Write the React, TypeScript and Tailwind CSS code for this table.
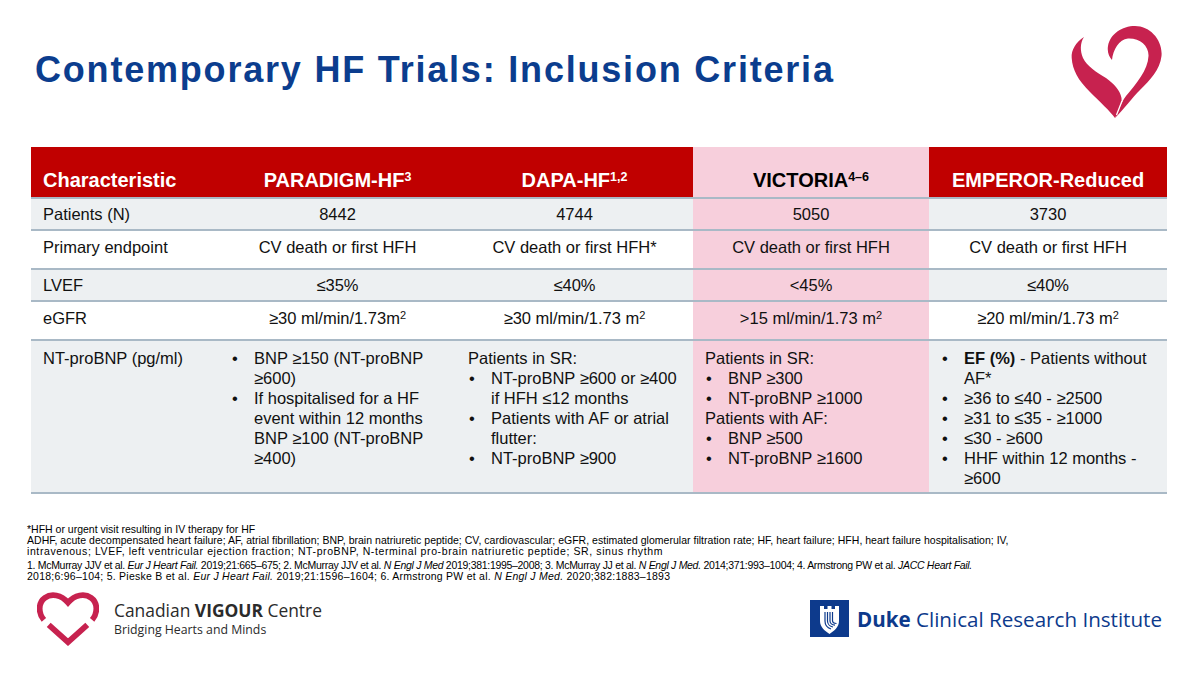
import React from "react";

const FONT = "font-['Liberation_Sans',Arial,sans-serif]";
const GRID = "grid grid-cols-[188px_237px_237px_236px_238px]";
const GRAY = "bg-[#edf0f2]";
const PINK = "bg-[#f7cfdc]";
const WHITE = "bg-white";

function TopHeart() {
  return (
    <svg width="92" height="94" viewBox="0 0 92 94">
      <path
        fill="#c7224f"
        d="M14,11 C6,16 1,24 1.7,32 C2.5,44 8,54 20,66 C30,76 40,85 45,92 L49,83 C51,79 52,76 51.5,72 C50,64 44,58 36,52 C26,46 17,40 13,32 C10,25 10,17 14,11 Z"
      />
      <path
        fill="#c7224f"
        d="M45,92 C55,82 62,72 70,64 C80,54 90,44 91.5,30 C93,14 80,0 65,0 C52,0 40,8 38,20 C37,26 39,31 42,34 C43,24 49,13 58,12.5 C70,12 79,20 78.5,30 C78,44 66,58 56,70 C53,74 51,78 49,83 L45,92 Z"
      />
      <path d="M52,75 L46.5,89" stroke="#ffffff" strokeWidth="1.3" fill="none" />
    </svg>
  );
}

function CvcHeart() {
  return (
    <svg width="62" height="54" viewBox="0 0 64 56">
      <path
        d="M7,29 C1,22 1,11 8,6 C15,1 25,3 32,11 C39,3 49,1 56,6 C63,11 63,22 57,29"
        stroke="#c7224f"
        strokeWidth="6"
        fill="none"
      />
      <path d="M12,34 L32,52 L52,34" stroke="#c7224f" strokeWidth="6" fill="none" />
    </svg>
  );
}

function DukeMark() {
  return (
    <svg width="39" height="37" viewBox="0 0 39 37">
      <rect x="0" y="0" width="39" height="37" fill="#0d3a8c" />
      <path
        d="M10,6 L14,6 L14,9 L17.5,9 L17.5,6 L21.5,6 L21.5,9 L25,9 L25,6 L29,6 L29,21 C29,27 24,31 19.5,34 C15,31 10,27 10,21 Z"
        fill="#ffffff"
      />
      <path
        d="M15,12 L15,21 C15,25 18,28 21,29 M17.5,12 L17.5,21 C17.5,24 20,26.5 23,27 M20,12 L20,21 C20,23 22,25 25,25.2 M22.5,12 L22.5,20.5 C22.5,22 24,23.5 26.5,23.5"
        stroke="#0d3a8c"
        strokeWidth="1.2"
        fill="none"
      />
    </svg>
  );
}

function Sup({ children, size = "text-[12.5px]" }: { children: React.ReactNode; size?: string }) {
  return <sup className={size}>{children}</sup>;
}

function B({ children }: { children: React.ReactNode }) {
  return (
    <div className="flex">
      <span className="w-[23px] shrink-0 pl-[1px]">•</span>
      <span className="whitespace-nowrap">{children}</span>
    </div>
  );
}

function P({ children }: { children: React.ReactNode }) {
  return <div className="whitespace-nowrap">{children}</div>;
}

function Row({
  h,
  bg,
  label,
  vals,
  pb = "",
}: {
  h: string;
  bg: string;
  label: React.ReactNode;
  vals: React.ReactNode[];
  pb?: string;
}) {
  return (
    <div className={GRID + " border-t-[2px] border-[#a9b9c6]"}>
      <div className={bg + " " + h + " " + pb + " flex items-center pl-[12px]"}>{label}</div>
      <div className={bg + " " + h + " " + pb + " flex items-center justify-center"}>{vals[0]}</div>
      <div className={bg + " " + h + " " + pb + " flex items-center justify-center"}>{vals[1]}</div>
      <div className={PINK + " " + h + " " + pb + " flex items-center justify-center"}>{vals[2]}</div>
      <div className={bg + " " + h + " " + pb + " flex items-center justify-center"}>{vals[3]}</div>
    </div>
  );
}

export default function App() {
  const m2 = <Sup size="text-[11px]">2</Sup>;
  return (
    <div className={FONT + " w-[1200px] h-[675px] bg-white text-[#111111] overflow-hidden"}>
      {/* Header */}
      <div className="flex justify-between items-start pl-[35px] pr-[38px] pt-[26px]">
        <h1 className="mt-[26px] text-[36px] leading-[35px] tracking-[1.8px] font-bold text-[#0b3d8e] whitespace-nowrap">
          Contemporary HF Trials: Inclusion Criteria
        </h1>
        <TopHeart />
      </div>

      {/* Table */}
      <div className="ml-[31px] mt-[27px] w-[1136px] text-[16.5px] leading-[20px]">
        <div className={GRID + " h-[50px] text-[20px] leading-[24px] font-bold"}>
          <div className="bg-[#c00000] text-white flex items-end pb-[5px] pl-[12px]">Characteristic</div>
          <div className="bg-[#c00000] text-white flex items-end justify-center pb-[5px]">
            <span>
              PARADIGM-HF<Sup>3</Sup>
            </span>
          </div>
          <div className="bg-[#c00000] text-white flex items-end justify-center pb-[5px]">
            <span>
              DAPA-HF<Sup>1,2</Sup>
            </span>
          </div>
          <div className={PINK + " text-black flex items-end justify-center pb-[5px]"}>
            <span>
              VICTORIA<Sup>4–6</Sup>
            </span>
          </div>
          <div className="bg-[#c00000] text-white flex items-end justify-center pb-[5px]">EMPEROR-Reduced</div>
        </div>

        <Row h="h-[30px]" bg={GRAY} label="Patients (N)" vals={["8442", "4744", "5050", "3730"]} />
        <Row
          h="h-[37px]"
          pb="pb-[5px]"
          bg={WHITE}
          label="Primary endpoint"
          vals={["CV death or first HFH", "CV death or first HFH*", "CV death or first HFH", "CV death or first HFH"]}
        />
        <Row h="h-[30px]" bg={GRAY} label="LVEF" vals={["≤35%", "≤40%", "<45%", "≤40%"]} />
        <Row
          h="h-[37px]"
          pb="pb-[5px]"
          bg={WHITE}
          label="eGFR"
          vals={[
            <span>≥30 ml/min/1.73m{m2}</span>,
            <span>≥30 ml/min/1.73 m{m2}</span>,
            <span>&gt;15 ml/min/1.73 m{m2}</span>,
            <span>≥20 ml/min/1.73 m{m2}</span>,
          ]}
        />

        <div className={GRID + " border-t-[2px] border-b-[2px] border-[#a9b9c6]"}>
          <div className={GRAY + " h-[151px] pt-[7px] pl-[12px]"}>NT-proBNP (pg/ml)</div>
          <div className={GRAY + " h-[151px] pt-[7px] pl-[12px]"}>
            <B>BNP ≥150 (NT-proBNP</B>
            <div className="pl-[23px]">≥600)</div>
            <B>If hospitalised for a HF</B>
            <div className="pl-[23px]">event within 12 months</div>
            <div className="pl-[23px]">BNP ≥100 (NT-proBNP</div>
            <div className="pl-[23px]">≥400)</div>
          </div>
          <div className={GRAY + " h-[151px] pt-[7px] pl-[12px]"}>
            <P>Patients in SR:</P>
            <B>NT-proBNP ≥600 or ≥400</B>
            <div className="pl-[23px]">if HFH ≤12 months</div>
            <B>Patients with AF or atrial</B>
            <div className="pl-[23px]">flutter:</div>
            <B>NT-proBNP ≥900</B>
          </div>
          <div className={PINK + " h-[151px] pt-[7px] pl-[12px]"}>
            <P>Patients in SR:</P>
            <B>BNP ≥300</B>
            <B>NT-proBNP ≥1000</B>
            <P>Patients with AF:</P>
            <B>BNP ≥500</B>
            <B>NT-proBNP ≥1600</B>
          </div>
          <div className={GRAY + " h-[151px] pt-[7px] pl-[12px]"}>
            <B>
              <span className="font-bold">EF (%)</span> - Patients without
            </B>
            <div className="pl-[23px]">AF*</div>
            <B>≥36 to ≤40 - ≥2500</B>
            <B>≥31 to ≤35 - ≥1000</B>
            <B>≤30 - ≥600</B>
            <B>HHF within 12 months -</B>
            <div className="pl-[23px]">≥600</div>
          </div>
        </div>
      </div>

      {/* Footnotes */}
      <div className="ml-[27px] mt-[30px] text-[10.5px] leading-[10.8px] text-black whitespace-nowrap">
        <div>*HFH or urgent visit resulting in IV therapy for HF</div>
        <div className="tracking-[0.02px]">
          ADHF, acute decompensated heart failure; AF, atrial fibrillation; BNP, brain natriuretic peptide; CV,
          cardiovascular; eGFR, estimated glomerular filtration rate; HF, heart failure; HFH, heart failure
          hospitalisation; IV,
        </div>
        <div className="tracking-[0.6px]">
          intravenous; LVEF, left ventricular ejection fraction; NT-proBNP, N-terminal pro-brain natriuretic peptide;
          SR, sinus rhythm
        </div>
        <div className="mt-[4px] tracking-[-0.3px]">
          1. McMurray JJV et al. <i>Eur J Heart Fail.</i> 2019;21:665–675; 2. McMurray JJV et al.{" "}
          <i>N Engl J Med</i> 2019;381:1995–2008; 3. McMurray JJ et al. <i>N Engl J Med.</i> 2014;371:993–1004; 4.
          Armstrong PW et al. <i>JACC Heart Fail.</i>
        </div>
        <div className="tracking-[0.25px]">
          2018;6:96–104; 5. Pieske B et al. <i>Eur J Heart Fail.</i> 2019;21:1596–1604; 6. Armstrong PW et al.{" "}
          <i>N Engl J Med.</i> 2020;382:1883–1893
        </div>
      </div>

      {/* Bottom logos */}
      <div className="flex justify-between items-center pl-[37px] pr-[38px] mt-[10px]">
        <div className="flex items-center">
          <CvcHeart />
          <div className="ml-[15px] font-['Open_Sans',sans-serif] text-[#2b2b2b]">
            <div className="text-[17.4px] leading-[22px]">
              Canadian <span className="font-bold">VIGOUR</span> Centre
            </div>
            <div className="text-[12.3px] leading-[18px]">Bridging Hearts and Minds</div>
          </div>
        </div>
        <div className="flex items-center">
          <DukeMark />
          <div className="ml-[8px] font-['Open_Sans',sans-serif] text-[20.6px] leading-[26px] text-[#0d3a8c] whitespace-nowrap">
            <span className="font-bold">Duke</span> Clinical Research Institute
          </div>
        </div>
      </div>
    </div>
  );
}
